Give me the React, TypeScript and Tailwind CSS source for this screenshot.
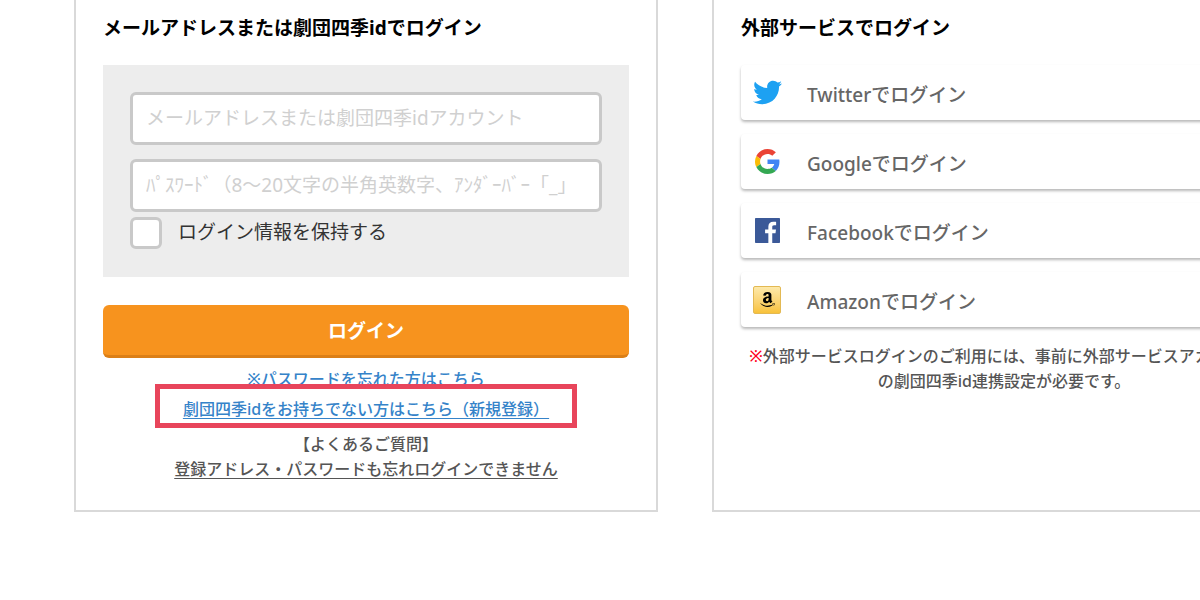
import React, { useState } from 'react';
import { FaAmazon, FaTwitter } from 'react-icons/fa';

function GoogleIcon() {
  return (
    <svg viewBox="0 0 48 48" className="h-[25px] w-[25px]" aria-hidden="true">
      <path fill="#EA4335" d="M24 9.5c3.54 0 6.71 1.22 9.21 3.6l6.85-6.85C35.9 2.38 30.47 0 24 0 14.62 0 6.51 5.38 2.56 13.22l7.98 6.19C12.43 13.72 17.74 9.5 24 9.5z" />
      <path fill="#4285F4" d="M46.98 24.55c0-1.57-.15-3.09-.38-4.55H24v9.02h12.94c-.58 2.96-2.26 5.48-4.78 7.18l7.73 6c4.51-4.18 7.09-10.36 7.09-17.65z" />
      <path fill="#FBBC05" d="M10.53 28.59c-.48-1.45-.76-2.99-.76-4.59s.27-3.14.76-4.59l-7.98-6.19C.92 16.46 0 20.12 0 24c0 3.88.92 7.54 2.56 10.78l7.97-6.19z" />
      <path fill="#34A853" d="M24 48c6.48 0 11.93-2.13 15.89-5.81l-7.73-6c-2.15 1.45-4.92 2.3-8.16 2.3-6.26 0-11.57-4.22-13.47-9.91l-7.98 6.19C6.51 42.62 14.62 48 24 48z" />
    </svg>
  );
}

function FacebookIcon() {
  return (
    <svg viewBox="0 0 24 24" className="h-[25px] w-[25px]" aria-hidden="true">
      <path
        fill="#3b5998"
        d="M23.3 0H.7C.3 0 0 .3 0 .7v22.6c0 .4.3.7.7.7h12.118v-9.294H9.689v-3.621h3.129V8.41c0-3.099 1.894-4.785 4.659-4.785 1.325 0 2.464.097 2.796.141v3.24h-1.921c-1.5 0-1.792.721-1.792 1.771v2.311h3.584l-.465 3.63H16.56V24h6.74c.4 0 .7-.3.7-.7V.7c0-.4-.3-.7-.7-.7"
      />
    </svg>
  );
}

function AmazonIcon() {
  return (
    <span className="flex h-7 w-7 items-center justify-center rounded-xs border border-[#e3b953] bg-linear-to-b from-[#fde9a9] to-[#f8c238]">
      <FaAmazon className="h-[17px] w-[17px] text-black" />
    </span>
  );
}

const SERVICES = [
  { name: 'Twitter', icon: <FaTwitter className="h-[29px] w-[29px] text-[#1da1f2]" /> },
  { name: 'Google', icon: <GoogleIcon /> },
  { name: 'Facebook', icon: <FacebookIcon /> },
  { name: 'Amazon', icon: <AmazonIcon /> },
];

const inputClass =
  'block h-[53px] w-full rounded-md border-3 border-[#c9c9c9] bg-white px-[13px] pb-0.5 text-[19px] text-[#333] outline-none placeholder:text-[#d0d0d0]';
const panelClass = 'border-2 border-t-0 border-[#d9d9d9] px-[27px] pb-7';
const headingClass = 'pt-[13px] text-[19px] leading-[30px] font-bold text-black';

function LoginPanel() {
  const [keepLogin, setKeepLogin] = useState(false);

  return (
    <section className={panelClass}>
      <h2 className={headingClass}>メールアドレスまたは劇団四季idでログイン</h2>
      <form onSubmit={(e) => e.preventDefault()}>
        <div className="mt-[22px] bg-[#ededed] px-[27px] pt-[27px] pb-7">
          <input className={inputClass} type="text" aria-label="メールアドレスまたは劇団四季idアカウント" placeholder="メールアドレスまたは劇団四季idアカウント" />
          <input className={`mt-3.5 ${inputClass}`} type="password" aria-label="パスワード" placeholder="ﾊﾟｽﾜｰﾄﾞ（8～20文字の半角英数字、ｱﾝﾀﾞｰﾊﾞｰ「_」" />
          <div className="mt-[5px] flex items-center gap-4">
            <input
              id="keep-login"
              type="checkbox"
              className="h-8 w-8 appearance-none rounded-md border-3 border-[#c9c9c9] bg-white checked:bg-[#f7931e]"
              checked={keepLogin}
              onChange={(e) => setKeepLogin(e.target.checked)}
            />
            <label htmlFor="keep-login" className="pb-0.5 text-[19px] leading-[30px] text-[#333]">ログイン情報を保持する</label>
          </div>
        </div>
        <button type="submit" className="mt-7 h-[53px] w-full rounded-md border-b-3 border-[#db7f17] bg-[#f7931e] pt-0.5 text-[19px] font-bold text-white">
          ログイン
        </button>
      </form>
      <div className="mt-[9px] flex flex-col items-center text-base leading-[25px] font-medium text-[#555]">
        <a href="#" className="text-[#3583c9] underline underline-offset-4">※パスワードを忘れた方はこちら</a>
        <a href="#" className="relative -mt-2 border-5 border-[#e8455b] bg-white px-[23px] pt-2 pb-px text-[#3583c9] underline underline-offset-3">
          劇団四季idをお持ちでない方はこちら（新規登録）
        </a>
        <p className="mt-1">【よくあるご質問】</p>
        <a href="#" className="underline underline-offset-3">登録アドレス・パスワードも忘れログインできません</a>
      </div>
    </section>
  );
}

function ServicePanel() {
  return (
    <section className={panelClass}>
      <h2 className={headingClass}>外部サービスでログイン</h2>
      <div className="mt-[22px] flex flex-col gap-3.5">
        {SERVICES.map((service) => (
          <button key={service.name} type="button" className="flex h-[55px] items-center gap-[25px] rounded-sm bg-white pl-[11px] shadow-[0_2px_3px_rgba(0,0,0,0.28)]">
            <span className="flex w-[30px] justify-center">{service.icon}</span>
            <span className="pt-[5px] text-[19px] font-medium text-[#666]">{service.name}でログイン</span>
          </button>
        ))}
      </div>
      <p className="mt-[17px] text-center text-base leading-[25px] font-medium text-[#555]">
        <span className="text-[#ff0022]">※</span>
        外部サービスログインのご利用には、事前に外部サービスアカウント
        <br />
        の劇団四季id連携設定が必要です。
      </p>
    </section>
  );
}

export default function App() {
  return (
    <main className="min-h-screen overflow-hidden bg-white font-['Noto_Sans','Noto_Sans_CJK_JP',sans-serif]">
      {/* second panel runs past the right edge of the window */}
      <div className="grid w-[108%] grid-cols-2 gap-[54px] pl-[74px]">
        <LoginPanel />
        <ServicePanel />
      </div>
    </main>
  );
}
